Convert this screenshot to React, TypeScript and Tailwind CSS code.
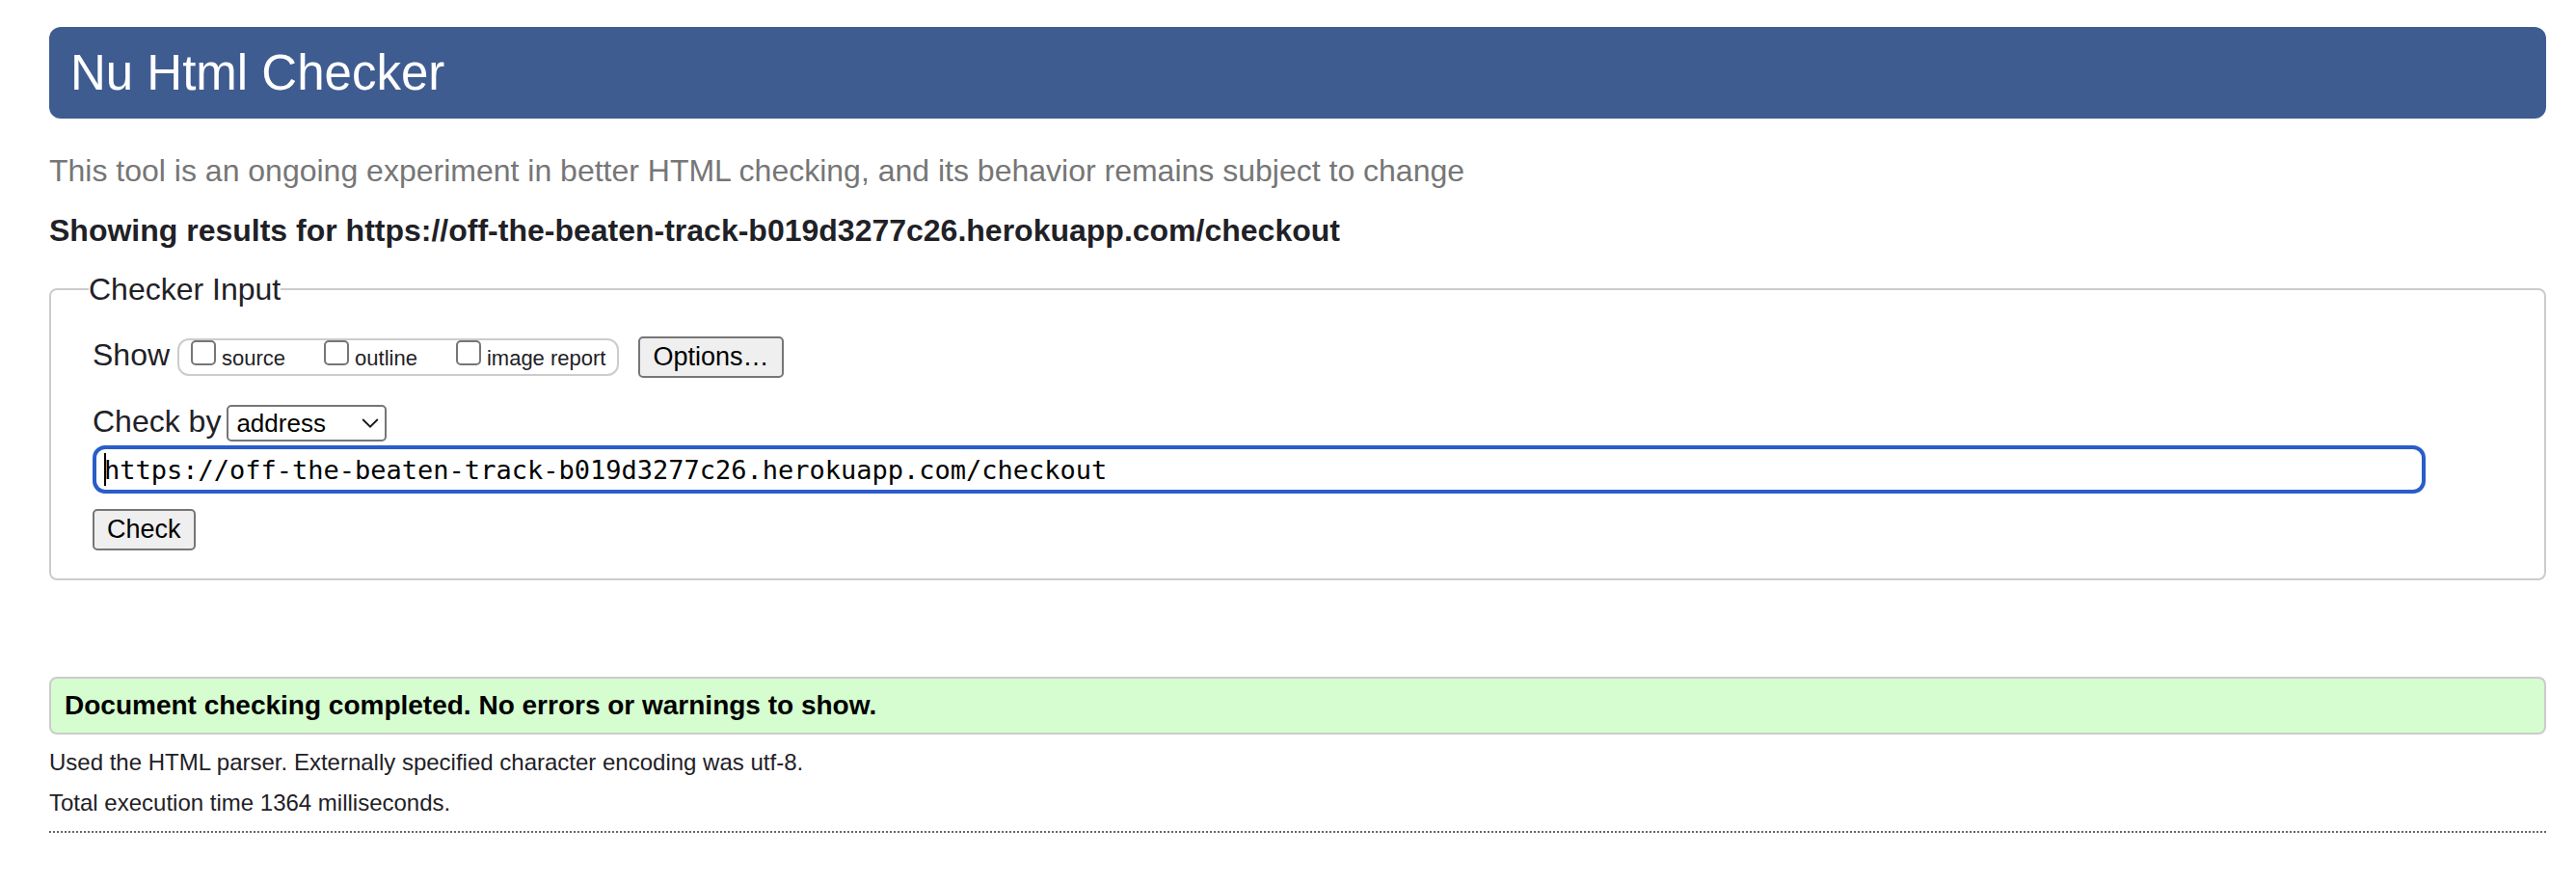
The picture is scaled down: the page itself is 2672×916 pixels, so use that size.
import { useState } from "react";

const pageUrl = "https://off-the-beaten-track-b019d3277c26.herokuapp.com/checkout";

const buttonClass =
  "h-[43px] rounded-[5px] border-2 border-[#767676] bg-[#efefef] px-[13px] text-[27px] leading-[39px] text-black";

function ShowOption({ id, label }: { id: string; label: string }) {
  return (
    <span className="flex items-baseline gap-[6px]">
      <input
        id={id}
        type="checkbox"
        className="size-[26px] shrink-0 appearance-none rounded-[5px] border-2 border-[#767676] bg-white checked:bg-[#2a5dc8]"
      />
      <label htmlFor={id}>{label}</label>
    </span>
  );
}

export default function App() {
  const [address, setAddress] = useState(pageUrl);

  return (
    <div className="min-h-screen bg-white pt-7 pr-[31px] pb-12 pl-[51px] font-['Liberation_Sans',Arial,sans-serif] text-[32px] leading-[36px] text-[#1f2126]">
      <header className="rounded-[12px] bg-[#3f5c91] px-[22px] pt-[18px] pb-[17px]">
        <h1 className="text-[51px] leading-[60px] text-white">Nu Html Checker</h1>
      </header>

      <main>
        <p className="mt-9 text-[#767676]">
          This tool is an ongoing experiment in better HTML checking, and its behavior remains subject to change
        </p>
        <h2 className="mt-[26px] font-bold">Showing results for {pageUrl}</h2>

        <form className="mt-[25px]" onSubmit={(event) => event.preventDefault()}>
          <fieldset className="rounded-[8px] border-2 border-[#ccc] pr-[123px] pb-[29px] pl-[43px]">
            <legend className="-ml-1">Checker Input</legend>

            <div className="flex items-baseline pt-[31px]">
              <span>Show</span>
              <div className="ml-2 flex h-[39px] items-baseline rounded-[12px] border-2 border-[#ccc] px-3 text-[22px] leading-[26px]">
                <div className="flex items-baseline gap-10">
                  <ShowOption id="show-source" label="source" />
                  <ShowOption id="show-outline" label="outline" />
                  <ShowOption id="show-image-report" label="image report" />
                </div>
              </div>
              <button type="button" className={`${buttonClass} ml-5`}>
                Options…
              </button>
            </div>

            <div className="mt-[27px] flex items-baseline gap-[6px]">
              <label htmlFor="check-by">Check by</label>
              <span className="relative">
                <select
                  id="check-by"
                  defaultValue="address"
                  className="block h-[38px] w-[166px] appearance-none rounded-[5px] border-2 border-[#767676] bg-white pl-2 text-[26px] leading-[34px] text-black"
                >
                  <option value="address">address</option>
                  <option value="file upload">file upload</option>
                  <option value="text input">text input</option>
                </select>
                <svg
                  viewBox="0 0 18 10"
                  className="pointer-events-none absolute top-[14px] right-2 h-[10px] w-[18px]"
                  fill="none"
                  stroke="#1a1a1a"
                  strokeWidth="1.9"
                  aria-hidden="true"
                >
                  <path d="M1.2 1 L9 8.6 L16.8 1" />
                </svg>
              </span>
            </div>

            <div className="relative mt-1">
              <input
                type="url"
                aria-label="Address of page to check"
                value={address}
                onChange={(event) => setAddress(event.target.value)}
                className="block h-[50px] w-full rounded-[13px] border-4 border-[#2a5dc8] bg-white px-2 font-['DejaVu_Sans_Mono',monospace] text-[27px] leading-[42px] text-black outline-none"
              />
              <span className="pointer-events-none absolute top-2 left-3 h-[34px] w-[2px] bg-black" />
            </div>

            <button type="submit" className={`${buttonClass} mt-4 block`}>
              Check
            </button>
          </fieldset>
        </form>

        <section className="mt-[100px]">
          <p className="rounded-[8px] border-2 border-[#ccc] bg-[#d5fdcf] px-[14px] py-3 text-[28px] leading-[32px] font-bold text-black">
            Document checking completed. No errors or warnings to show.
          </p>
          <div className="mt-[15px] flex flex-col gap-[14px] border-b-2 border-dotted border-[#666] pb-[15px] text-[24px] leading-[28px]">
            <p>Used the HTML parser. Externally specified character encoding was utf-8.</p>
            <p>Total execution time 1364 milliseconds.</p>
          </div>
        </section>
      </main>
    </div>
  );
}
